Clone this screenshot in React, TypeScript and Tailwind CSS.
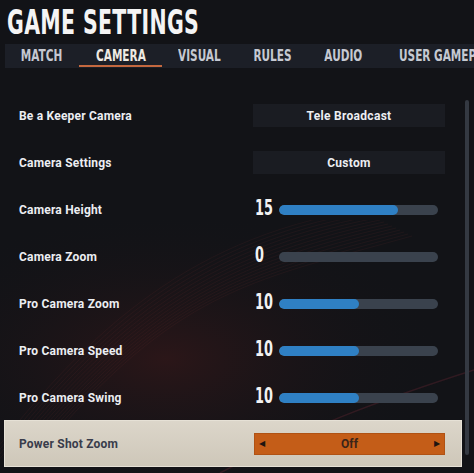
import React from "react";

const cond = { fontFamily: '"DejaVu Sans Condensed", "DejaVu Sans", sans-serif', fontStretch: "condensed" as const };

type Row =
  | { label: string; kind: "select"; value: string }
  | { label: string; kind: "slider"; value: number };

const rows: Row[] = [
  { label: "Be a Keeper Camera", kind: "select", value: "Tele Broadcast" },
  { label: "Camera Settings", kind: "select", value: "Custom" },
  { label: "Camera Height", kind: "slider", value: 15 },
  { label: "Camera Zoom", kind: "slider", value: 0 },
  { label: "Pro Camera Zoom", kind: "slider", value: 10 },
  { label: "Pro Camera Speed", kind: "slider", value: 10 },
  { label: "Pro Camera Swing", kind: "slider", value: 10 },
];

const tabs = [
  { t: "MATCH", w: "w-[74px] justify-center" },
  { t: "CAMERA", w: "w-[83px] justify-center" },
  { t: "VISUAL", w: "w-[75px] justify-center" },
  { t: "RULES", w: "w-[70px] justify-center" },
  { t: "AUDIO", w: "w-[73px] justify-center" },
  { t: "USER GAMEPLAY", w: "w-[120px] justify-start pl-[19px]" },
];

export default function App() {
  return (
    <div
      className="relative w-[474px] h-[473px] overflow-hidden bg-[#121317] text-white"
      style={{ fontFamily: 'Roboto, "Liberation Sans", sans-serif' }}
    >
      {/* background waves */}
      <svg className="absolute left-0 top-[220px] w-[474px] h-[253px] pointer-events-none" viewBox="0 0 474 253">
        <defs>
          <radialGradient id="glow" cx="0.35" cy="0.55" r="0.6">
            <stop offset="0" stopColor="#4a1a1a" stopOpacity="0.45" />
            <stop offset="1" stopColor="#121317" stopOpacity="0" />
          </radialGradient>
        </defs>
        <rect x="0" y="0" width="474" height="253" fill="url(#glow)" />
        {Array.from({ length: 14 }).map((_, i) => (
          <path
            key={i}
            d={`M ${-20 + i * 6} ${250 - i * 3} C ${80 + i * 8} ${120 - i * 4}, ${180 + i * 6} ${20 + i * 3}, ${360 + i * 4} ${-10 + i * 2}`}
            stroke="#7a3030"
            strokeOpacity="0.12"
            strokeWidth="1"
            fill="none"
          />
        ))}
        <path d="M 220 253 C 300 210, 380 180, 474 150" stroke="#8a3040" strokeOpacity="0.25" strokeWidth="1.5" fill="none" />
      </svg>

      <div className="relative flex flex-col">
        {/* title */}
        <div className="h-[44px] pl-[7px] pt-[3px] whitespace-nowrap">
          <div
            className="inline-block origin-left scale-x-[0.69] text-[33px] leading-[40px] font-bold tracking-[0.5px] text-[#f4f4f4]"
            style={cond}
          >
            GAME SETTINGS
          </div>
        </div>

        {/* tabs */}
        <div className="ml-[5px] h-[24px] bg-[#1c1f27] flex items-stretch overflow-hidden whitespace-nowrap">
          {tabs.map(({ t, w }) => {
            const active = t === "CAMERA";
            const last = t === "USER GAMEPLAY";
            return (
              <div key={t} className={`relative shrink-0 ${w} flex items-center`}>
                <span
                  className={`inline-block ${last ? "origin-left" : ""} scale-x-[0.78] text-[15px] font-bold leading-none ${active ? "text-[#eeeae2]" : "text-[#c5c9d2]"}`}
                  style={cond}
                >
                  {t}
                </span>
                {active && <div className="absolute left-0 right-0 bottom-[1px] h-[2px] bg-[#c4683f]" />}
              </div>
            );
          })}
        </div>

        {/* content */}
        <div className="flex pt-[24px]">
          <div className="w-[458px] ml-[4px] flex flex-col">
            {rows.map((r) => (
              <div key={r.label} className="h-[47px] flex items-center">
                <div className="w-[249px] pl-[15px] text-[12px] font-bold text-[#eceef2] tracking-[0.2px]">{r.label}</div>
                {r.kind === "select" ? (
                  <div className="w-[192px] h-[23px] bg-[#1a1c22] flex items-center justify-center text-[12px] font-bold text-[#eceef2] tracking-[0.3px]">
                    {r.value}
                  </div>
                ) : (
                  <div className="flex items-center">
                    <div className="w-[26px] pl-[2px]">
                      <span
                        className="inline-block origin-left scale-x-[0.68] text-[21px] font-bold leading-none text-[#f2f2f2]"
                        style={cond}
                      >
                        {r.value}
                      </span>
                    </div>
                    <div className="w-[159px] h-[10px] rounded-full bg-[#3a424d] overflow-hidden">
                      <div className="h-full rounded-full bg-[#2f80c4]" style={{ width: `${(r.value / 20) * 100}%` }} />
                    </div>
                  </div>
                )}
              </div>
            ))}
            {/* highlighted row */}
            <div className="h-[47px] -mt-[1px] flex items-center bg-gradient-to-b from-[#dcd6ca] to-[#cec7b9] border border-[#e6e1d6]">
              <div className="w-[249px] pl-[14px] text-[12px] font-bold text-[#393c4b] tracking-[0.2px]">Power Shot Zoom</div>
              <div className="w-[191px] h-[22px] bg-[#c45d18] border border-[#b05214] flex items-center justify-between px-[4px]">
                <span className="text-[8px] text-[#1e1410] leading-none">◀</span>
                <span className="text-[12px] font-bold text-[#3a2418]">Off</span>
                <span className="text-[8px] text-[#1e1410] leading-none">▶</span>
              </div>
            </div>
          </div>
          <div className="ml-[3px] mt-[8px] w-[4px] h-[355px] rounded-full bg-[#343942]" />
        </div>
      </div>
    </div>
  );
}
